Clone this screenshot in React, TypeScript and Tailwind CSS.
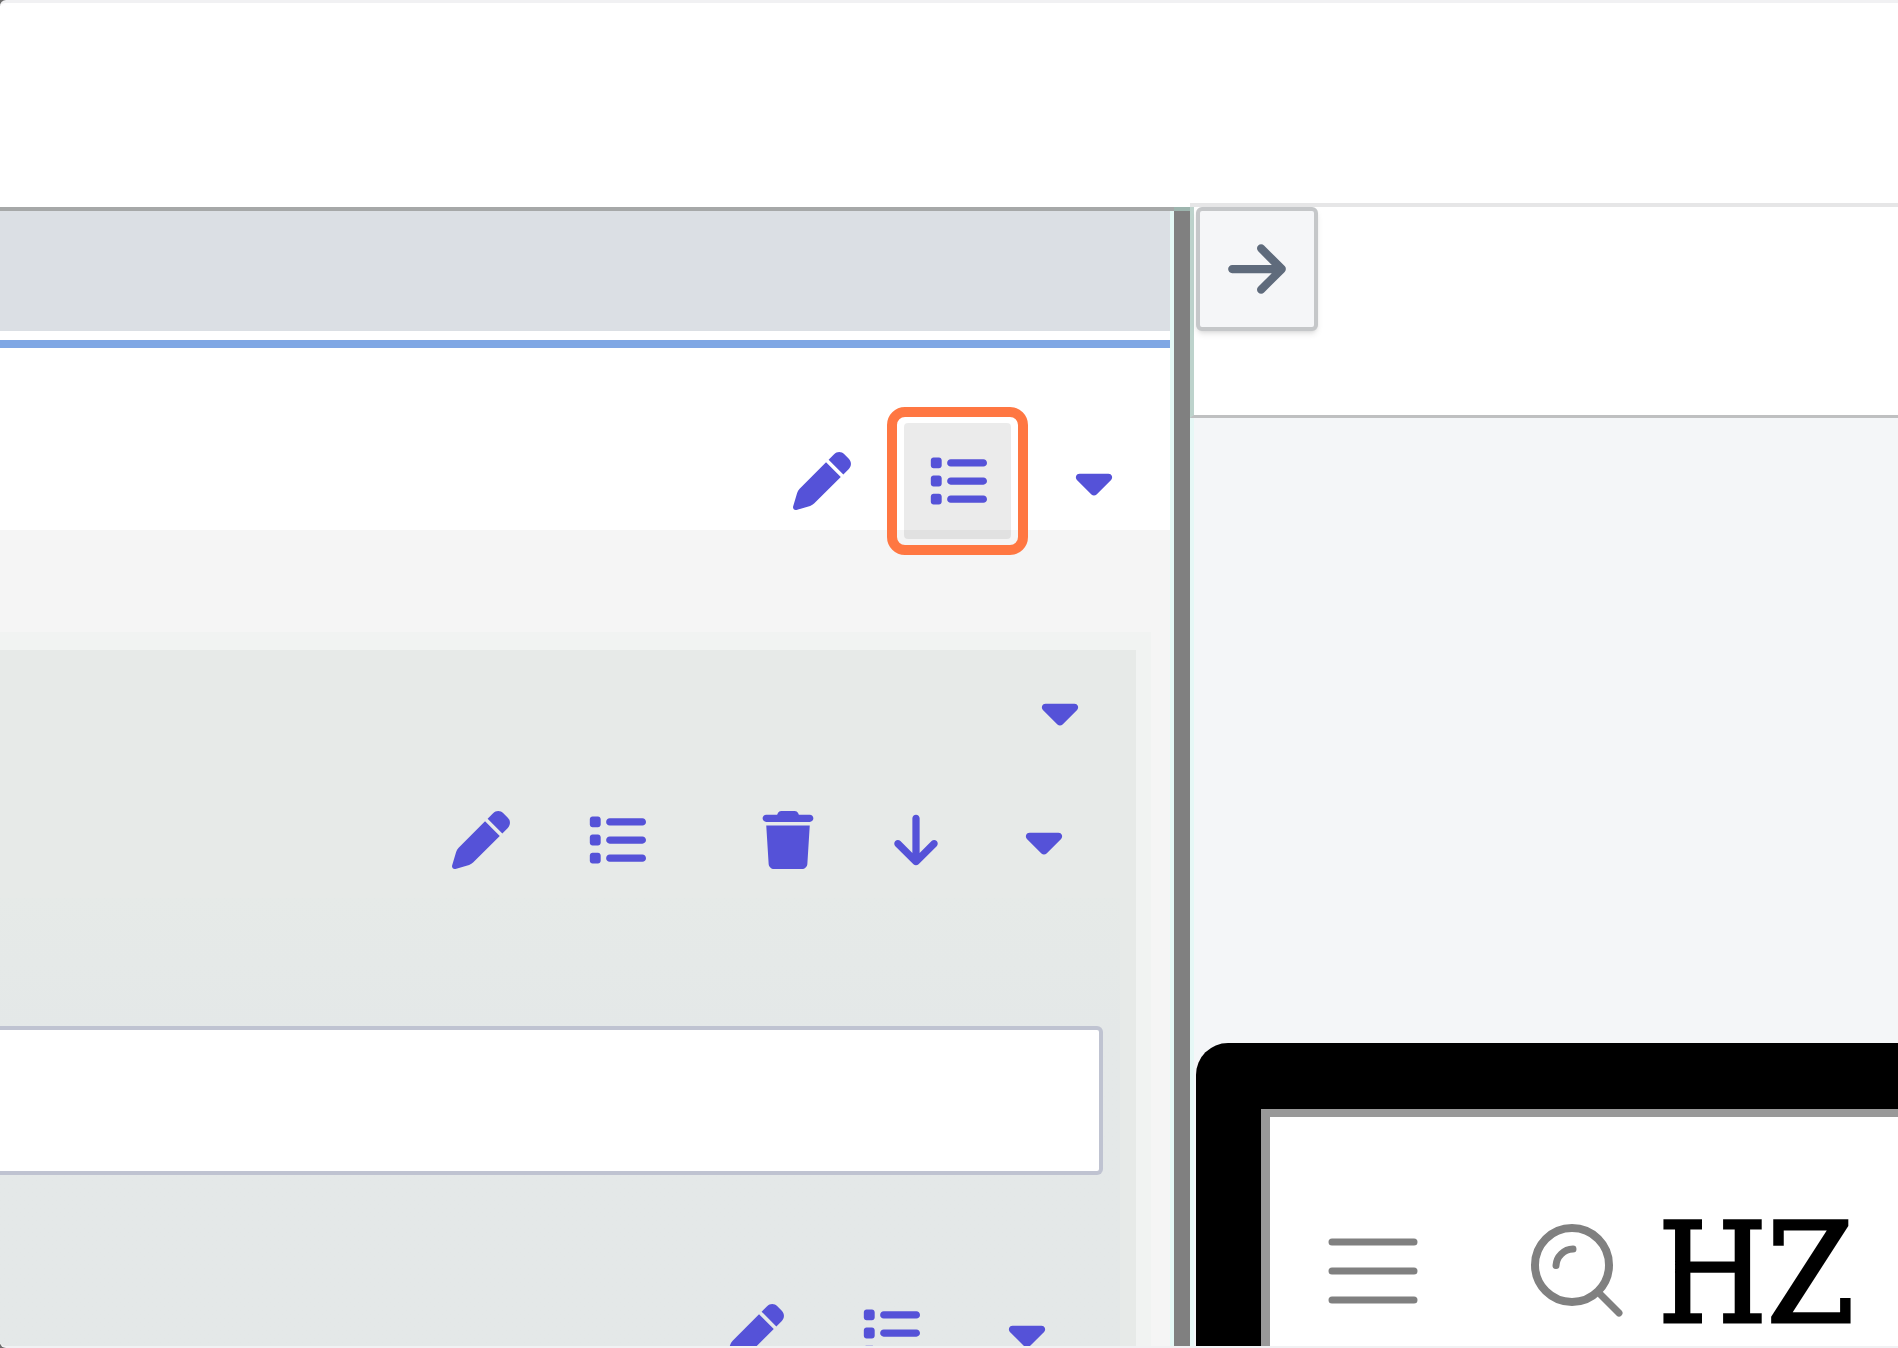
import React from "react";
import clsx from "clsx";
import { FaArrowDown, FaArrowRight, FaCaretDown, FaList, FaPen, FaTrash } from "react-icons/fa6";
import type { IconType } from "react-icons";

type IconButtonProps = {
  icon: IconType;
  label: string;
  active?: boolean;
};

const IconButton = ({ icon: Icon, label, active }: IconButtonProps) => (
  <button
    type="button"
    aria-label={label}
    className={clsx(
      "relative flex h-[116px] w-[107px] shrink-0 items-center justify-center rounded-sm text-[#5552d8]",
      active && "bg-black/8"
    )}
  >
    <Icon className="h-[58px] w-[58px]" />
    {/* Highlight ring around the current step */}
    {active && (
      <span className="absolute -inset-x-[17px] -inset-y-4 rounded-[18px] border-10 border-[#ff7742]" />
    )}
  </button>
);

const Editor = () => (
  <section className="flex min-w-0 flex-[1174] flex-col pt-[5px]">
    <div className="h-1 shrink-0 bg-[#a6a8a8]" />
    <div className="flex min-h-0 flex-1 flex-col border-r-4 border-[#e4f8f5]">
      <div className="h-[120px] shrink-0 bg-[#dbdfe4]" />
      <div className="mt-[9px] h-2 shrink-0 bg-[#7fa7e4]" />

      {/* Section header */}
      <div className="relative z-10 flex h-[182px] shrink-0 justify-end gap-[29px] pt-[75px] pr-[23px]">
        <IconButton icon={FaPen} label="Edit" />
        <IconButton icon={FaList} label="Options" active />
        <IconButton icon={FaCaretDown} label="Collapse" />
      </div>

      {/* Section body */}
      <div className="min-h-0 flex-1 bg-[#f5f5f5] pt-[102px] pr-[19px]">
        <div className="h-full bg-[#f1f3f2] pt-[18px] pr-[15px]">
          <div className="flex h-full flex-col bg-[#e7eae8]">
            <div className="flex shrink-0 justify-end pt-[3px] pr-[23px]">
              <IconButton icon={FaCaretDown} label="Collapse group" />
            </div>
            <div className="flex shrink-0 justify-end pt-[13px] pr-[39px]">
              <div className="mr-16 flex gap-[29px]">
                <IconButton icon={FaPen} label="Edit group" />
                <IconButton icon={FaList} label="Group options" />
              </div>
              <div className="flex gap-[21px]">
                <IconButton icon={FaTrash} label="Delete group" />
                <IconButton icon={FaArrowDown} label="Move down" />
                <IconButton icon={FaCaretDown} label="Collapse item" />
              </div>
            </div>
            <div className="mr-4 min-h-0 flex-1 bg-linear-to-b from-[#e6eae8] to-[#e4e8e8] to-30% pt-32">
              <div className="pr-[17px]">
                <input
                  type="text"
                  aria-label="Title"
                  className="block h-[149px] w-full rounded-r-md border-4 border-l-0 border-[#bfc3d1] bg-white px-6 text-5xl outline-none"
                />
              </div>
              <div className="flex justify-end gap-[29px] pt-[100px] pr-10">
                <IconButton icon={FaPen} label="Edit field" />
                <IconButton icon={FaList} label="Field options" />
                <IconButton icon={FaCaretDown} label="Collapse field" />
              </div>
            </div>
          </div>
        </div>
      </div>
    </div>
  </section>
);

const Preview = () => (
  <section className="flex min-w-0 flex-[708] flex-col pt-px">
    <div className="h-1 shrink-0 bg-[#e6e6e7]" />
    <div className="h-[211px] shrink-0 border-b-3 border-l-4 border-b-[#bfc0c1] border-l-[#bdd3cc] pl-[2px]">
      <button
        type="button"
        aria-label="Hide editor"
        className="flex h-[124px] w-[122px] items-center justify-center rounded-md border-4 border-[#c5c7c9] bg-[#f5f6f8] text-[#5f6b7c] shadow-md"
      >
        <FaArrowRight className="h-[66px] w-[66px]" />
      </button>
    </div>
    <div className="flex min-h-0 flex-1 flex-col border-l-4 border-[#e6f8f6] bg-[#f4f6f8] pt-[625px] pl-[2px]">
      {/* Device frame */}
      <div className="min-h-0 flex-1 overflow-hidden rounded-tl-[32px] bg-black pt-[66px] pl-[65px]">
        <div className="h-full border-t-8 border-l-9 border-[#999] bg-white">
          <div className="flex items-start pt-[70px] pl-[58px]">
            <button type="button" aria-label="Menu" className="mt-[51px]">
              <svg className="h-[66px] w-[90px]" viewBox="0 0 90 66" fill="none" stroke="#808080" strokeWidth="7" strokeLinecap="round">
                <path d="M4 4H86M4 33H86M4 62H86" />
              </svg>
            </button>
            <button type="button" aria-label="Search" className="mt-[36px] ml-[112px]">
              <svg className="h-[94px] w-[94px]" viewBox="0 0 94 94" fill="none" stroke="#808080" strokeWidth="7">
                <circle cx="42" cy="42" r="37" strokeWidth="8" />
                <path d="M26 42.500A17.500 17.500 0 0 1 43 26" strokeLinecap="round" />
                <path d="M71 72L89 90" strokeLinecap="round" />
              </svg>
            </button>
            <a
              href="#home"
              className="mt-4 ml-[34px] font-['DejaVu_Serif_Condensed','DejaVu_Serif',serif] text-[139px] leading-[142px] text-black [-webkit-text-stroke:3px_black] [font-stretch:condensed]"
            >
              HZ
            </a>
          </div>
        </div>
      </div>
    </div>
  </section>
);

export default function App() {
  return (
    <div className="h-screen bg-[#6b6b6b]">
      <div className="flex h-full flex-col overflow-hidden rounded-l-md border-t-3 border-b-2 border-[#f1f1f3] bg-white">
        <header className="h-[199px] shrink-0" />
        <main className="flex min-h-0 flex-1">
          <Editor />
          {/* Resize handle */}
          <div className="mt-[5px] w-4 shrink-0 border-t-4 border-[#9db5ae] bg-[#808080]" />
          <Preview />
        </main>
      </div>
    </div>
  );
}
